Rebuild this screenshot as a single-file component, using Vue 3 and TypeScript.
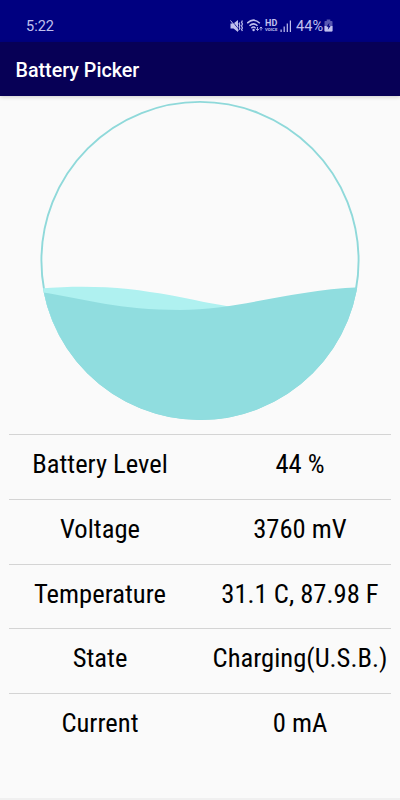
<script setup lang="ts">
interface Reading {
  label: string
  value: string
}

const readings: Reading[] = [
  { label: 'Battery Level', value: '44 %' },
  { label: 'Voltage', value: '3760 mV' },
  { label: 'Temperature', value: '31.1 C, 87.98 F' },
  { label: 'State', value: 'Charging(U.S.B.)' },
  { label: 'Current', value: '0 mA' },
]
</script>

<template>
  <div class="screen">
    <header class="status">
      <span class="clock">5:22</span>
      <div class="indicators">
        <svg class="mute" width="14" height="14" viewBox="0 0 14 14">
          <path d="M.5 4.5h3L8 1v12L3.5 9.5h-3z" fill="currentColor" />
          <path d="M1.3 1l7.5 9.5" stroke="#000080" stroke-width=".8" />
          <path d="M.5 1.5l8 10" stroke="currentColor" stroke-width="1" />
          <path d="M9.9 3.5l-.8 1.3.8 1.7-.8 1.5.8 1.5-.8 1.3M12.4 1.5l-.8 1.7.8 1.8-.8 2 .8 2-.8 1.6.8 1.4" fill="none" stroke="currentColor" stroke-width="1.2" />
        </svg>
        <svg class="wifi" width="16" height="13" viewBox="0 0 16 13">
          <g fill="none" stroke="currentColor" stroke-width="1.5">
            <path d="M.2 4.2Q6.5-1.9 12.8 4.2" />
            <path d="M2.5 6.8Q6.5 2.9 10.5 6.8" />
            <path d="M4.4 9.2Q6.5 7 8.6 9.2" />
          </g>
          <circle cx="6.6" cy="11" r="1.2" fill="currentColor" />
          <path d="M10.5 8v3.2M9.1 10l1.4 1.5 1.4-1.5M14 11.5V8.2M12.6 9.4L14 8l1.4 1.4" fill="none" stroke="currentColor" stroke-width=".9" />
        </svg>
        <span class="hd"><b>HD</b><small>VOICE</small></span>
        <svg class="signal" width="12" height="12" viewBox="0 0 12 12">
          <path d="M.5 9.5h1.2V12H.5zM3.6 6.5h1.2V12H3.6zM6.7 3.5h1.2V12H6.7zM9.8.5H11V12H9.8z" fill="currentColor" />
        </svg>
        <span class="percent">44%</span>
        <svg class="cell" width="9" height="13" viewBox="0 0 9 13">
          <path d="M2.7.5h3.6V2h1.5q.7 0 .7.7v9q0 .8-.7.8H1.2q-.7 0-.7-.8v-9Q.5 2 1.2 2h1.5z" fill="currentColor" fill-opacity=".45" />
          <path d="M.5 7h8v4.7q0 .8-.7.8H1.2q-.7 0-.7-.8z" fill="currentColor" />
          <path d="M5.4 3.7L2.5 7.8h1.9l-.6 3L6.6 6.9h-1.8z" fill="#000080" />
        </svg>
      </div>
    </header>
    <h1 class="appbar">Battery Picker</h1>
    <main>
      <svg class="gauge" width="320" height="322" viewBox="40 100 320 322">
        <defs>
          <clipPath id="disc"><circle cx="200" cy="260.5" r="159.5" /></clipPath>
        </defs>
        <circle cx="200" cy="260.5" r="158.6" fill="none" stroke="#8fd9da" stroke-width="1.9" />
        <g clip-path="url(#disc)">
          <path d="M40 288.4C95 284.5 130 288 172 295.6C193 299.5 210 304 240 308V340H40z" fill="#aff1f0" />
          <path d="M40 292C85 299 120 310 180 310C239 310 290 290 360 287.3V421H40z" fill="#90dddf" />
        </g>
      </svg>
      <dl class="readings">
        <div v-for="reading in readings" :key="reading.label" class="row">
          <dt><span>{{ reading.label }}</span></dt>
          <dd><span>{{ reading.value }}</span></dd>
        </div>
      </dl>
    </main>
  </div>
</template>

<style>
body {
  margin: 0;
  background: #fafafa;
}
</style>

<style scoped>
.screen {
  box-sizing: border-box;
  width: 400px;
  height: 800px;
  overflow: hidden;
  background: #fafafa;
  border-bottom: 2px solid #f0f0f0;
  font-family: Roboto, sans-serif;
  color: #000;
}
.status {
  box-sizing: border-box;
  height: 42px;
  padding: 10px 67px 0 26px;
  background: #000080;
  color: #c0c0ee;
  display: flex;
  justify-content: space-between;
}
.clock {
  font-size: 14.5px;
  line-height: 33px;
}
.indicators {
  display: flex;
  align-items: center;
  height: 31px;
}
.wifi { margin-left: 3px; }
.hd {
  display: flex;
  flex-direction: column;
  width: 13px;
  margin-left: 2px;
}
.hd b {
  font-size: 9px;
  line-height: 8px;
}
.hd small {
  font-size: 4.3px;
  font-weight: 700;
  line-height: 5px;
}
.signal { margin-left: 2px; }
.percent {
  margin-left: 4px;
  font-size: 14.5px;
  line-height: 31px;
  padding-top: 1px;
}
.cell { margin-left: 1px; }
.appbar {
  position: relative;
  box-sizing: border-box;
  height: 54px;
  margin: 0;
  padding-left: 15.5px;
  background: #070056;
  color: #fff;
  font-size: 19.7px;
  font-weight: 500;
  line-height: 57px;
  box-shadow: 0 1px 4px rgba(0, 0, 0, 0.18);
}
.gauge {
  display: block;
  margin: 4px auto 12px;
}
.readings {
  margin: 0 9px;
}
.row {
  box-sizing: border-box;
  height: 64.8px;
  border-top: 1px solid #d4d4d4;
  display: grid;
  grid-template-columns: 1fr 1fr;
}
dt, dd {
  display: flex;
  justify-content: center;
  margin: 0;
  font-family: "Roboto Condensed", Roboto, sans-serif;
  font-stretch: 75%;
  font-size: 26.6px;
  line-height: 57.6px;
  white-space: nowrap;
}
dd { padding-left: 9px; }
dt { padding-right: 9px; }
</style>
